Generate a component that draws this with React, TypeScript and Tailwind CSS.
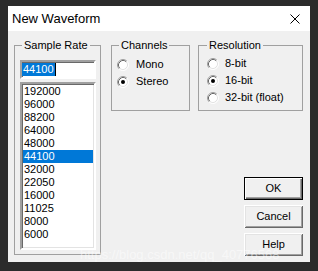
import React from 'react'

const rates = ['192000', '96000', '88200', '64000', '48000', '44100', '32000', '22050', '16000', '11025', '8000', '6000']

function Radio ({ checked }: { checked?: boolean }) {
  return (
    <svg width="12" height="12" viewBox="0 0 12 12" className="shrink-0">
      <circle cx="6" cy="6" r="5" fill="#fff" />
      <path d="M2.11 9.89 A5.5 5.5 0 0 1 9.89 2.11" fill="none" stroke="#a0a0a0" strokeWidth="1" />
      <path d="M9.89 2.11 A5.5 5.5 0 0 1 2.11 9.89" fill="none" stroke="#fff" strokeWidth="1" />
      <path d="M2.82 9.18 A4.5 4.5 0 0 1 9.18 2.82" fill="none" stroke="#696969" strokeWidth="1" />
      <path d="M9.18 2.82 A4.5 4.5 0 0 1 2.82 9.18" fill="none" stroke="#e3e3e3" strokeWidth="1" />
      {checked && <circle cx="6" cy="6" r="2" fill="#000" />}
    </svg>
  )
}

function Option ({ label, checked, wide }: { label: string, checked?: boolean, wide?: boolean }) {
  return (
    <div className={wide ? 'flex items-center h-[17px] gap-[6px] pl-[8px]' : 'flex items-center h-[17px] gap-[7px] pl-[5px]'}>
      <Radio checked={checked} />
      <span>{label}</span>
    </div>
  )
}

function Btn ({ label, primary }: { label: string, primary?: boolean }) {
  return (
    <div
      className={
        primary
          ? 'w-[59px] h-[23px] flex items-center justify-center border border-black bg-[#f0f0f0] shadow-[inset_1px_1px_0_#fff,inset_-1px_-1px_0_#696969,inset_-2px_-2px_0_#a0a0a0]'
          : 'w-[59px] h-[23px] flex items-center justify-center bg-[#f0f0f0] shadow-[inset_1px_1px_0_#fff,inset_-1px_-1px_0_#696969,inset_2px_2px_0_#e3e3e3,inset_-2px_-2px_0_#a0a0a0]'
      }
    >
      {label}
    </div>
  )
}

export default function App () {
  return (
    <div className="relative w-[318px] h-[271px] overflow-hidden bg-[#2b2b2b] pt-[6px] pl-[8px] font-['Liberation_Sans',Arial,sans-serif] text-[11px] leading-[13px] text-black">
      <div className="w-[302px] h-[256px] flex flex-col">
        <div className="h-[25px] bg-white flex items-center justify-between pl-[4px] pr-[10px]">
          <span className="text-[13px]">New Waveform</span>
          <svg width="10" height="10" viewBox="0 0 10 10">
            <path d="M0.5 0.5 L9.5 9.5 M9.5 0.5 L0.5 9.5" stroke="#000" strokeWidth="1" />
          </svg>
        </div>
        <div className="flex-1 bg-[#f0f0f0] flex pl-[6px] pt-[7px]">
          <fieldset className="w-[87px] h-[217px] border border-[#a0a0a0] flex flex-col">
            <legend className="ml-[7px] px-[2px] leading-[14px]">Sample Rate</legend>
            <div className="ml-[5px] mt-[8px] w-[76px] h-[19px] bg-white border-2 border-t-[#a0a0a0] border-l-[#a0a0a0] border-b-[#fff] border-r-[#fff] shadow-[inset_1px_1px_0_#696969] flex items-center pl-[0px]">
              <span className="bg-[#0078d7] text-white px-[1px]">44100</span>
              <span className="w-px h-[13px] bg-black" />
            </div>
            <div className="ml-[5px] mt-[3px] w-[76px] h-[168px] bg-white border-2 border-t-[#a0a0a0] border-l-[#a0a0a0] border-b-[#fff] border-r-[#fff] shadow-[inset_1px_1px_0_#696969,inset_-1px_-1px_0_#e3e3e3] pt-[1px] px-[1px]">
              {rates.map(r => (
                <div key={r} className={r === '44100' ? 'h-[13px] pl-[1px] bg-[#0078d7] text-white' : 'h-[13px] pl-[1px]'}>
                  {r}
                </div>
              ))}
            </div>
          </fieldset>
          <div className="ml-[10px] w-[192px] flex flex-col">
            <div className="flex gap-[8px]">
              <fieldset className="w-[79px] h-[73px] border border-[#a0a0a0]">
                <legend className="ml-[7px] px-[2px] leading-[14px]">Channels</legend>
                <div className="pt-[4px]">
                  <Option label="Mono" />
                  <Option label="Stereo" checked />
                </div>
              </fieldset>
              <fieldset className="w-[105px] h-[73px] border border-[#a0a0a0]">
                <legend className="ml-[8px] px-[2px] leading-[14px]">Resolution</legend>
                <div className="pt-[3px]">
                  <Option label="8-bit" wide />
                  <Option label="16-bit" checked wide />
                  <Option label="32-bit (float)" wide />
                </div>
              </fieldset>
            </div>
            <div className="self-end mt-[66px] flex flex-col gap-[5px]">
              <Btn label="OK" primary />
              <Btn label="Cancel" />
              <Btn label="Help" />
            </div>
          </div>
        </div>
      </div>
      <div className="absolute left-[80px] top-[247px] text-[13px] leading-[16px] text-white/50 whitespace-nowrap pointer-events-none">
        https://blog.csdn.net/qq_40776568
      </div>
    </div>
  )
}
